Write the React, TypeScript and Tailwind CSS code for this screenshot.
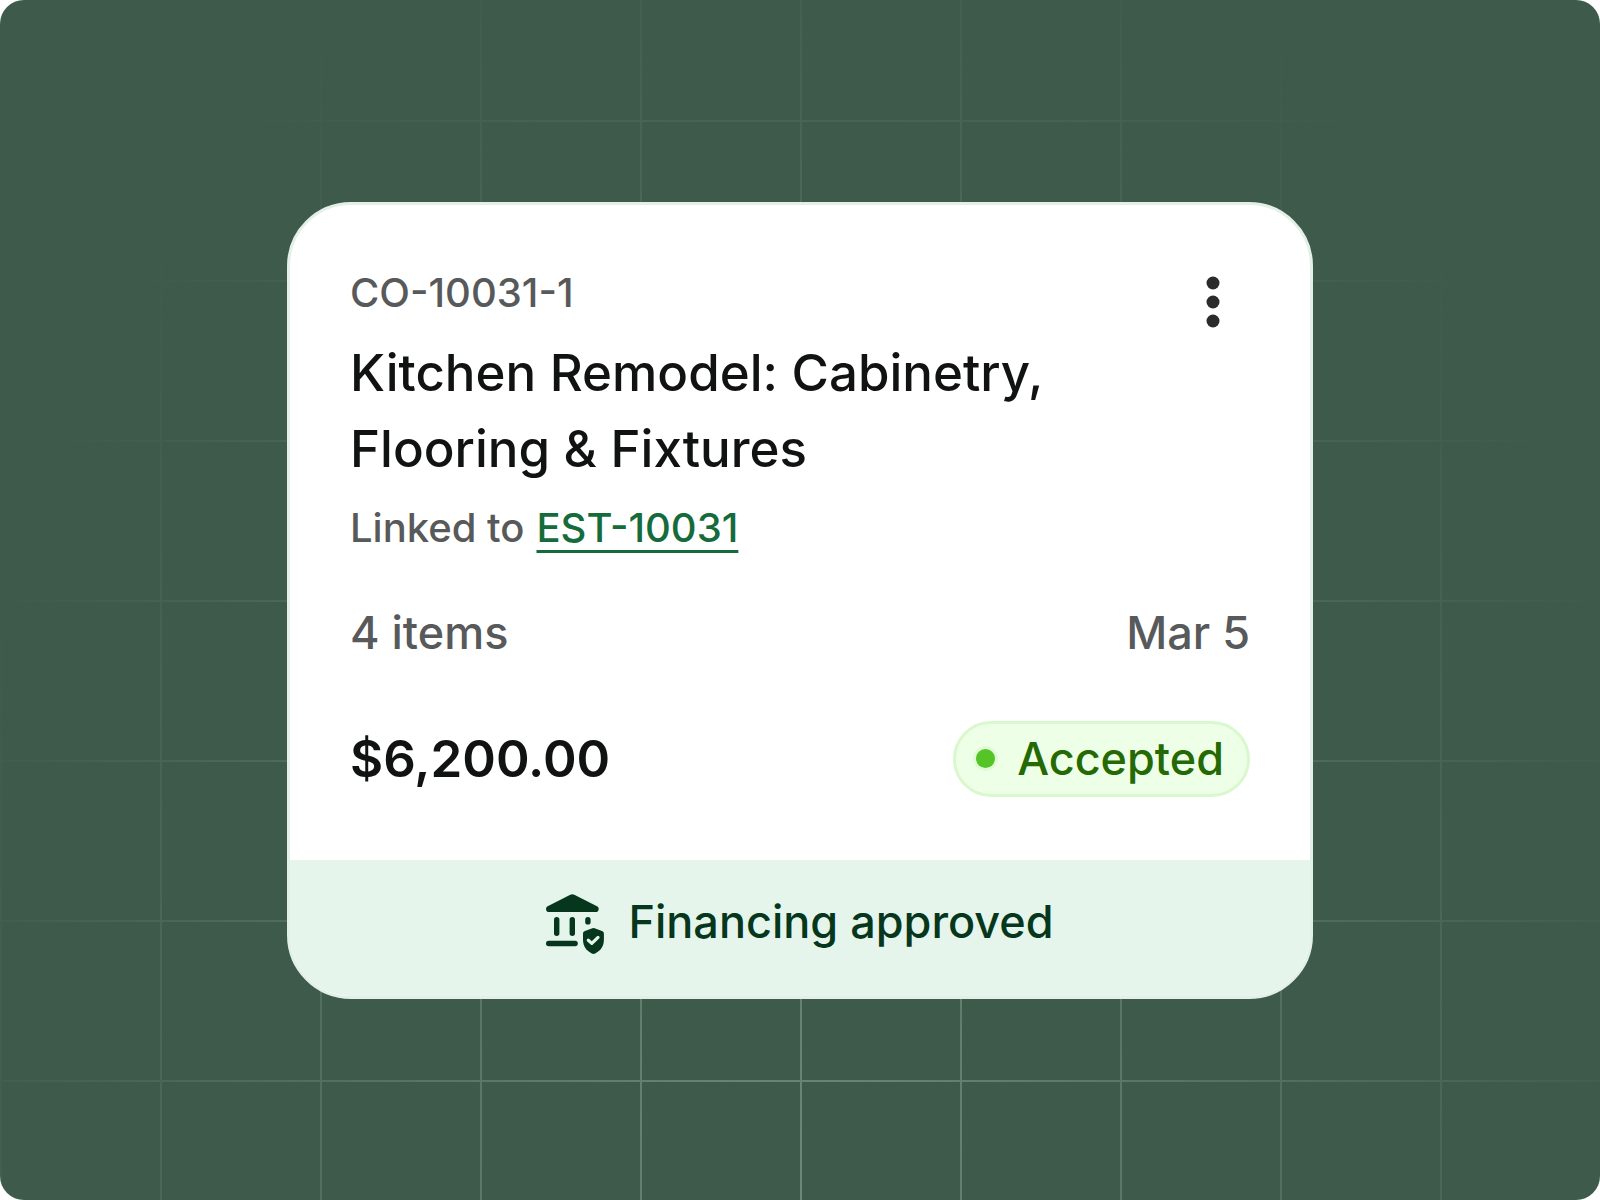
interface ChangeOrder {
    number: string;
    title: string;
    estimate: string;
    items: number;
    date: string;
    total: string;
    status: string;
}

const order: ChangeOrder = {
    number: "CO-10031-1",
    title: "Kitchen Remodel: Cabinetry, Flooring & Fixtures",
    estimate: "EST-10031",
    items: 4,
    date: "Mar 5",
    total: "$6,200.00",
    status: "Accepted",
};

const BankShieldIcon = () => (
    <svg className="h-16 w-[60px] shrink-0" viewBox="0 0 60 64" fill="currentColor" aria-hidden="true">
        <path d="M24.3 4.7a4.5 4.5 0 0 1 4 0L51 16.2c1.2.7 1.7 1.6 1.7 2.8 0 2-1.2 3.1-3 3.1H3c-1.8 0-3-1.1-3-3.1 0-1.2.5-2.1 1.7-2.8z" />
        <rect x="8" y="27" width="5.4" height="19" rx="2.7" />
        <rect x="23.6" y="27" width="5.4" height="19" rx="2.7" />
        <rect x="39.2" y="27" width="5.4" height="7.6" rx="2.7" />
        <rect x="0" y="50.8" width="31.8" height="5.4" rx="2.7" />
        <path d="M46.4 38.3a3.2 3.2 0 0 1 2.2 0l7.4 2.8c1.2.5 1.9 1.4 1.9 2.7v6c0 6.6-3.3 11-8.7 13.7a3.5 3.5 0 0 1-3.4 0C40.4 60.8 37 56.4 37 49.8v-6c0-1.3.7-2.2 1.9-2.7z" />
        <path
            d="M42.3 50.2l3.5 3.2 6.2-6"
            fill="none"
            stroke="#e5f5ec"
            strokeWidth="3.2"
            strokeLinecap="round"
            strokeLinejoin="round"
        />
    </svg>
);

const MoreIcon = () => (
    <svg className="h-[52px] w-4" viewBox="0 0 16 52" fill="currentColor" aria-hidden="true">
        <circle cx="8" cy="7" r="6.5" />
        <circle cx="8" cy="26" r="6.5" />
        <circle cx="8" cy="45" r="6.5" />
    </svg>
);

const StatusBadge = ({ label }: { label: string }) => (
    <span className="flex h-[76px] items-center gap-[22px] rounded-full border-[3px] border-[#daf8cd] bg-[#edffe6] pl-5 pr-[23px] text-[45px] font-medium text-[#256905]">
        <span className="size-[19px] rounded-full bg-[#55c426] ring-3 ring-[#e0fbd5]" />
        {label}
    </span>
);

// grid lines fade out from the bottom centre
const GridBackdrop = () => (
    <div
        className="absolute inset-0 bg-[linear-gradient(to_right,#809a89_2px,transparent_2px),linear-gradient(to_bottom,#809a89_2px,transparent_2px)]
      bg-[length:160px_160px] bg-[position:0_0,0_120px]
      [mask-image:radial-gradient(ellipse_900px_1400px_at_50%_100%,rgba(0,0,0,0.72),transparent)]"
    />
);

export default function App() {
    return (
        <div className="bg-white font-['Inter',sans-serif]">
            <main className="relative isolate flex min-h-screen items-center justify-center overflow-hidden rounded-3xl bg-[#3e5a4a] p-6">
                <GridBackdrop />
                <article className="relative w-full max-w-[1026px] overflow-hidden rounded-[64px] border-[3px] border-[#e2f0e7] bg-white">
                    <div className="px-15 pb-[63px] pt-15 text-[#58595a]">
                        <header className="flex items-start justify-between gap-4">
                            <div className="flex flex-col gap-[14px]">
                                <p className="text-[40px] font-medium leading-[56px]">{order.number}</p>
                                <h1 className="text-[51px] font-medium leading-[76px] text-[#111212]">
                                    {order.title}
                                </h1>
                                <p className="flex gap-3 text-[40px] font-medium leading-[54px]">
                                    Linked to
                                    <a
                                        href="#estimate"
                                        className="text-[#166b3b] underline decoration-3 underline-offset-8"
                                    >
                                        {order.estimate}
                                    </a>
                                </p>
                            </div>
                            <button
                                type="button"
                                aria-label="More options"
                                className="flex size-[74px] shrink-0 items-center justify-center text-[#2a2b2b]"
                            >
                                <MoreIcon />
                            </button>
                        </header>
                        <div className="mt-[46px] flex justify-between text-[45px] font-medium leading-[64px]">
                            <span>{order.items} items</span>
                            <time>{order.date}</time>
                        </div>
                        <div className="mt-14 flex items-center justify-between">
                            <strong className="text-[51px] font-semibold leading-[76px] text-[#111212]">
                                {order.total}
                            </strong>
                            <StatusBadge label={order.status} />
                        </div>
                    </div>
                    <footer className="flex items-center justify-center gap-[22px] bg-[#e5f5ec] pb-[42px] pt-[30px] text-[45px] font-medium leading-[64px] text-[#06371d]">
                        <BankShieldIcon />
                        Financing approved
                    </footer>
                </article>
            </main>
        </div>
    );
}
